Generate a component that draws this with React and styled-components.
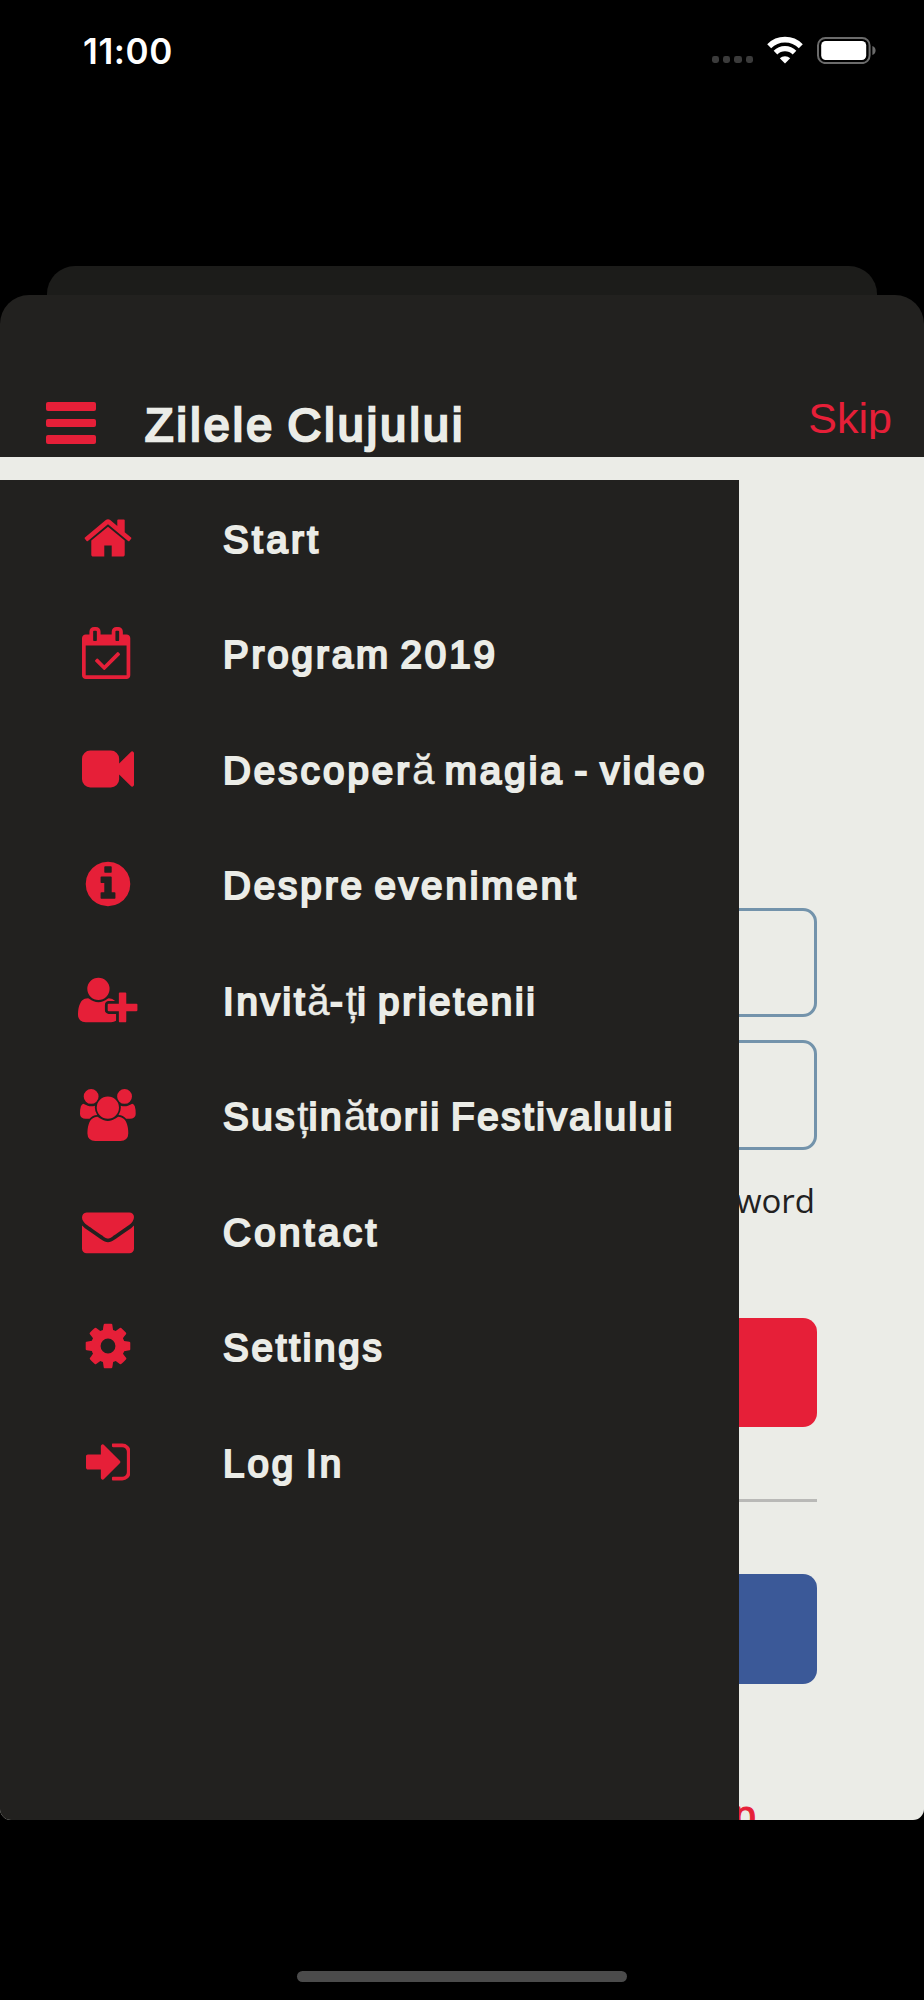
import styled, { createGlobalStyle } from 'styled-components';

const GlobalStyle = createGlobalStyle`
    body {
        margin: 0;
        background: #000;
    }

    * {
        box-sizing: border-box;
    }
`;

const Screen = styled.div`
    display: flex;
    flex-direction: column;
    width: 924px;
    height: 2000px;
    background: #000;
    font-family: 'Liberation Sans', Arial, sans-serif;
    overflow: hidden;
`;

const StatusBar = styled.div`
    display: flex;
    justify-content: space-between;
    align-items: flex-start;
    height: 266px;
    padding: 36px 47px 0 83px;
`;

const Clock = styled.div`
    font-family: Inter, sans-serif;
    font-size: 35px;
    font-weight: 600;
    line-height: 30px;
    letter-spacing: 0.6px;
    color: #fff;
`;

const StatusIcons = styled.div`
    display: flex;
    align-items: flex-start;
    gap: 14px;
    height: 30px;
`;

const SignalDots = styled.div`
    display: flex;
    gap: 4px;
    margin-top: 20px;

    span {
        width: 7.3px;
        height: 7.3px;
        border-radius: 2.4px;
        background: #3b3b3b;
    }
`;

const BackSheet = styled.div`
    height: 29px;
    margin: 0 47px;
    border-radius: 28px 28px 0 0;
    background: #1c1c1a;
`;

const Sheet = styled.div`
    height: 1524.5px;
`;

const Header = styled.div`
    display: flex;
    align-items: flex-start;
    height: 162px;
    padding: 0 32px 0 46px;
    border-radius: 29px 29px 0 0;
    background: #22211f;
`;

const MenuButton = styled.button`
    display: flex;
    flex-direction: column;
    gap: 8.2px;
    width: 50px;
    margin-top: 107px;
    padding: 0;
    border: none;
    background: none;

    span {
        height: 8.5px;
        border-radius: 2px;
        background: #e61f38;
    }
`;

const Title = styled.div`
    flex: 1;
    margin: 103px 0 0 49px;
    font-size: 46.5px;
    line-height: 54px;
    letter-spacing: 3.2px;
    word-spacing: -4px;
    color: #ebece7;
    -webkit-text-stroke: 2.6px #ebece7;
`;

const SkipButton = styled.button`
    height: 46px;
    margin-top: 98px;
    padding: 0;
    border: none;
    background: none;
    overflow: hidden;
    font-family: inherit;
    font-size: 43px;
    line-height: 50px;
    color: #e61f38;
`;

const Body = styled.div`
    position: relative;
    height: 1362.5px;
    border-radius: 0 0 11px 11px;
    background: #ebece7;
    overflow: hidden;
`;

const Form = styled.div`
    display: flex;
    flex-direction: column;
    margin: 0 107px;
    padding-top: 450.5px;
`;

const Field = styled.div`
    height: 109.5px;
    margin-bottom: 23px;
    border: 3px solid #7393ab;
    border-radius: 14px;
`;

const ForgotLink = styled.div`
    height: 46px;
    margin: 5px 2px 94px 0;
    font-family: 'Open Sans', sans-serif;
    font-size: 33px;
    font-weight: 400;
    line-height: 46px;
    text-align: right;
    color: #22211f;
`;

const FormButton = styled.div`
    height: 109.5px;
    border-radius: 14px;
    background: ${({ $color }) => $color};
`;

const Divider = styled.div`
    height: 3px;
    margin: 72px 0;
    background: #b9b9b7;
`;

const SignUp = styled.div`
    margin: 111px 61px 0 0;
    font-size: 40px;
    line-height: 40px;
    text-align: right;
    color: #e61f38;
    -webkit-text-stroke: 1.2px #e61f38;
`;

const Drawer = styled.nav`
    position: absolute;
    top: 23px;
    left: 0;
    bottom: 0;
    width: 739.3px;
    background: #22211f;
`;

const MenuRow = styled.div`
    display: flex;
    align-items: flex-start;
    height: 115.5px;
    padding-top: 31.5px;
`;

const IconCell = styled.div`
    display: flex;
    justify-content: center;
    width: 216px;
    color: #e61f38;

    svg {
        height: 52px;
    }
`;

const Label = styled.div`
    margin-left: 7px;
    padding-top: 5px;
    font-size: 38.5px;
    line-height: 46px;
    letter-spacing: ${({ $spacing }) => $spacing}px;
    word-spacing: -4px;
    white-space: nowrap;
    color: #ebece7;
    -webkit-text-stroke: 2.2px #ebece7;
`;

const Thin = styled.span`
    font-size: 40px;
    line-height: 1;
    letter-spacing: 0.5px;
    -webkit-text-stroke: 0.4px #ebece7;
`;

const HomeIndicator = styled.div`
    width: 330px;
    height: 11px;
    margin: 151.5px auto 0;
    border-radius: 6px;
    background: #4b4b4b;
`;

// [viewBox, path]
const icons = {
    home: ['0 0 1792 1792', 'M1472 992v480q0 26-19 45t-45 19h-384v-384h-256v384h-384q-26 0-45-19t-19-45v-480q0-1 .5-3t.5-3l575-474 575 474q1 2 1 6zm223-69l-62 74q-8 9-21 11h-3q-13 0-21-7l-692-577-692 577q-12 8-24 7-13-2-21-11l-62-74q-8-10-7-23.5t11-21.5l719-599q32-26 76-26t76 26l244 204v-195q0-14 9-23t23-9h192q14 0 23 9t9 23v408l219 182q10 8 11 21.5t-7 23.5z'],
    calendar: ['0 0 1792 1792', 'M1303 964l-512 512q-10 9-23 9t-23-9l-288-288q-9-10-9-23t9-22l46-46q9-9 22-9t23 9l220 220 444-444q10-9 23-9t22 9l46 46q9 9 9 22t-9 23zm-1175 700h1408v-1024h-1408v1024zm384-1216v-288q0-14-9-23t-23-9h-64q-14 0-23 9t-9 23v288q0 14 9 23t23 9h64q14 0 23-9t9-23zm768 0v-288q0-14-9-23t-23-9h-64q-14 0-23 9t-9 23v288q0 14 9 23t23 9h64q14 0 23-9t9-23zm384-64v1280q0 52-38 90t-90 38h-1408q-52 0-90-38t-38-90v-1280q0-52 38-90t90-38h128v-96q0-66 47-113t113-47h64q66 0 113 47t47 113v96h384v-96q0-66 47-113t113-47h64q66 0 113 47t47 113v96h128q52 0 90 38t38 90z'],
    video: ['0 0 1792 1792', 'M1792 352v1088q0 42-39 59-13 5-25 5-27 0-45-19l-403-403v166q0 119-84.5 203.5t-203.5 84.5h-704q-119 0-203.5-84.5t-84.5-203.5v-704q0-119 84.5-203.5t203.5-84.5h704q119 0 203.5 84.5t84.5 203.5v165l403-402q18-19 45-19 12 0 25 5 39 17 39 59z'],
    info: ['0 0 1792 1792', 'M1152 1376v-160q0-14-9-23t-23-9h-96v-512q0-14-9-23t-23-9h-320q-14 0-23 9t-9 23v160q0 14 9 23t23 9h96v320h-96q-14 0-23 9t-9 23v160q0 14 9 23t23 9h448q14 0 23-9t9-23zm-128-896v-160q0-14-9-23t-23-9h-192q-14 0-23 9t-9 23v160q0 14 9 23t23 9h192q14 0 23-9t9-23zm640 416q0 209-103 385.5t-279.5 279.5-385.5 103-385.5-103-279.5-279.5-103-385.5 103-385.5 279.5-279.5 385.5-103 385.5 103 279.5 279.5 103 385.5z'],
    userPlus: ['0 0 2048 1792', 'M704 896q-159 0-271.5-112.5t-112.5-271.5 112.5-271.5 271.5-112.5 271.5 112.5 112.5 271.5-112.5 271.5-271.5 112.5zm960 128h352q13 0 22.5 9.5t9.5 22.5v192q0 13-9.5 22.5t-22.5 9.5h-352v352q0 13-9.5 22.5t-22.5 9.5h-192q-13 0-22.5-9.5t-9.5-22.5v-352h-352q-13 0-22.5-9.5t-9.5-22.5v-192q0-13 9.5-22.5t22.5-9.5h352v-352q0-13 9.5-22.5t22.5-9.5h192q13 0 22.5 9.5t9.5 22.5v352zm-736 224q0 52 38 90t90 38h256v238q-68 50-171 50h-874q-121 0-194-69t-73-190q0-53 3.5-103.5t14-109 26.5-108.5 43-97.5 62-81 85.5-53.5 111.5-20q19 0 39 17 79 61 154.5 91.5t164.5 30.5 164.5-30.5 154.5-91.5q20-17 39-17 132 0 217 96h-223q-52 0-90 38t-38 90v192z'],
    users: ['64 0 1920 1792', 'M657 896q-162 5-265 128h-134q-82 0-138-40.5t-56-118.5q0-353 124-353 6 0 43.5 21t97.5 42.5 119 21.5q67 0 133-23-5 37-5 66 0 139 81 256zm1071 637q0 120-73 189.5t-194 69.5h-874q-121 0-194-69.5t-73-189.5q0-53 3.5-103.5t14-109 26.5-108.5 43-97.5 62-81 85.5-53.5 111.5-20q10 0 43 21.5t73 48 107 48 135 21.5 135-21.5 107-48 73-48 43-21.5q61 0 111.5 20t85.5 53.5 62 81 43 97.5 26.5 108.5 14 109 3.5 103.5zm-1024-1277q0 106-75 181t-181 75-181-75-75-181 75-181 181-75 181 75 75 181zm704 384q0 159-112.5 271.5t-271.5 112.5-271.5-112.5-112.5-271.5 112.5-271.5 271.5-112.5 271.5 112.5 112.5 271.5zm576 225q0 78-56 118.5t-138 40.5h-134q-103-123-265-128 81-117 81-256 0-29-5-66 66 23 133 23 59 0 119-21.5t97.5-42.5 43.5-21q124 0 124 353zm-128-609q0 106-75 181t-181 75-181-75-75-181 75-181 181-75 181 75 75 181z'],
    envelope: ['0 0 1792 1792', 'M1792 710v794q0 66-47 113t-113 47h-1472q-66 0-113-47t-47-113v-794q44 49 101 87 362 246 497 345 57 42 92.5 65.5t94.5 48 110 24.5h2q51 0 110-24.5t94.5-48 92.5-65.5q170-123 498-345 57-39 100-87zm0-294q0 79-49 151t-122 123q-376 261-468 325-10 7-42.5 30.5t-54 38-52 32.5-57.5 27-50 9h-2q-23 0-50-9t-57.5-27-52-32.5-54-38-42.5-30.5q-91-64-262-182.5t-205-142.5q-62-42-117-115.5t-55-136.5q0-78 41.5-130t118.5-52h1472q65 0 112.5 47t47.5 113z'],
    cog: ['0 0 1792 1792', 'M1152 896q0-106-75-181t-181-75-181 75-75 181 75 181 181 75 181-75 75-181zm512-109v222q0 12-8 23t-20 13l-185 28q-19 54-39 91 35 50 107 138 10 12 10 25t-9 23q-27 37-99 108t-94 71q-12 0-26-9l-138-108q-44 23-91 38-16 136-29 186-7 28-36 28h-222q-14 0-24.5-8.5t-11.5-21.5l-28-184q-49-16-90-37l-141 107q-10 9-25 9-14 0-25-11-126-114-165-168-7-10-7-23 0-12 8-23 15-21 51-66.5t54-70.5q-27-50-41-99l-183-27q-13-2-21-12.5t-8-23.5v-222q0-12 8-23t19-13l186-28q14-46 39-92-40-57-107-138-10-12-10-24 0-10 9-23 26-36 98.5-107.5t94.5-71.5q13 0 26 10l138 107q44-23 91-38 16-136 29-186 7-28 36-28h222q14 0 24.5 8.5t11.5 21.5l28 184q49 16 90 37l142-107q9-9 24-9 13 0 25 10 129 119 165 170 7 8 7 22 0 12-8 23-15 21-51 66.5t-54 70.5q26 50 41 98l183 28q13 2 21 12.5t8 23.5z'],
    signIn: ['0 0 1536 1792', 'M1184 896q0 26-19 45l-544 544q-19 19-45 19t-45-19-19-45v-288h-448q-26 0-45-19t-19-45v-384q0-26 19-45t45-19h448v-288q0-26 19-45t45-19 45 19l544 544q19 19 19 45zm352-352v704q0 119-84.5 203.5t-203.5 84.5h-320q-13 0-22.5-9.5t-9.5-22.5q0-4-1-20t-.5-26.5 3-23.5 10-19.5 20.5-6.5h320q66 0 113-47t47-113v-704q0-66-47-113t-113-47h-312l-11.5-1-11.5-3-8-5.5-7-9-2-13.5q0-4-1-20t-.5-26.5 3-23.5 10-19.5 20.5-6.5h320q119 0 203.5 84.5t84.5 203.5z'],
};

const menuItems = [
    { icon: 'home', label: 'Start', spacing: 3.4 },
    { icon: 'calendar', label: 'Program 2019', spacing: 2.9 },
    { icon: 'video', label: 'Descoperă magia - video', spacing: 3.05 },
    { icon: 'info', label: 'Despre eveniment', spacing: 2.95 },
    { icon: 'userPlus', label: 'Invită-ți prietenii', spacing: 2.75 },
    { icon: 'users', label: 'Susținătorii Festivalului', spacing: 2.6 },
    { icon: 'envelope', label: 'Contact', spacing: 3.4 },
    { icon: 'cog', label: 'Settings', spacing: 2.8 },
    { icon: 'signIn', label: 'Log In', spacing: 3 },
];

function Icon({ name }) {
    const [viewBox, path] = icons[name];
    return (
        <svg viewBox={viewBox} fill='currentColor'>
            <path d={path} />
        </svg>
    );
}

// ă and ț fall back to the lighter face
function renderLabel(label) {
    return label.split(/([ăț])/).map((part, i) => (
        /[ăț]/.test(part) ? <Thin key={i}>{part}</Thin> : part
    ));
}

function WifiIcon() {
    return (
        <svg width='36' height='28' viewBox='0 0 36 28' fill='none' stroke='#fff'>
            <path d='M2.2 10.2a22.3 22.3 0 0 1 31.6 0' strokeWidth='5.6' />
            <path d='M8.5 16.6a13.4 13.4 0 0 1 19 0' strokeWidth='5.2' />
            <path d='M18 27.5l-5.2-5.2a7.4 7.4 0 0 1 10.4 0z' fill='#fff' stroke='none' />
        </svg>
    );
}

function BatteryIcon() {
    return (
        <svg width='60' height='28' viewBox='0 0 60 28'>
            <rect x='1' y='1.9' width='51.6' height='25.2' rx='7.5' fill='none' stroke='#6b6b6b' strokeWidth='2' />
            <rect x='4.2' y='5' width='45' height='19' rx='4.5' fill='#fff' />
            <path d='M55.4 10v9q3.2-1.2 3.2-4.5t-3.2-4.5z' fill='#6b6b6b' />
        </svg>
    );
}

export default function App() {
    return (
        <>
            <GlobalStyle />
            <Screen>
                <StatusBar>
                    <Clock>11:00</Clock>
                    <StatusIcons>
                        <SignalDots>
                            <span />
                            <span />
                            <span />
                            <span />
                        </SignalDots>
                        <WifiIcon />
                        <BatteryIcon />
                    </StatusIcons>
                </StatusBar>
                <BackSheet />
                <Sheet>
                    <Header>
                        <MenuButton type='button'>
                            <span />
                            <span />
                            <span />
                        </MenuButton>
                        <Title>Zilele Clujului</Title>
                        <SkipButton type='button'>Skip</SkipButton>
                    </Header>
                    <Body>
                        <Form>
                            <Field />
                            <Field />
                            <ForgotLink>word</ForgotLink>
                            <FormButton $color='#e61f38' />
                            <Divider />
                            <FormButton $color='#3b5998' />
                            <SignUp>p</SignUp>
                        </Form>
                        <Drawer>
                            {menuItems.map(({ icon, label, spacing }) => (
                                <MenuRow key={icon}>
                                    <IconCell>
                                        <Icon name={icon} />
                                    </IconCell>
                                    <Label $spacing={spacing}>{renderLabel(label)}</Label>
                                </MenuRow>
                            ))}
                        </Drawer>
                    </Body>
                </Sheet>
                <HomeIndicator />
            </Screen>
        </>
    );
}
